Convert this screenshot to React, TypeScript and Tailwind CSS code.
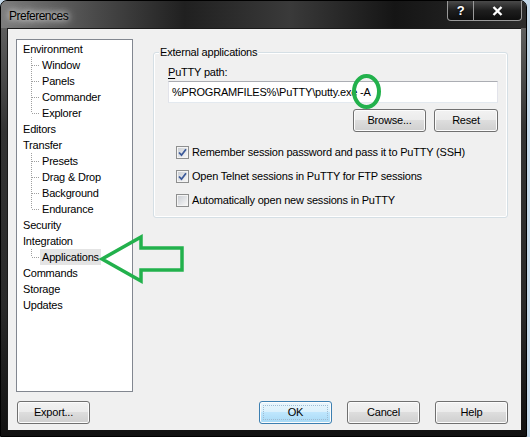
import React from 'react';

type Node = { label: string; children?: string[] };

const tree: Node[] = [
  { label: 'Environment', children: ['Window', 'Panels', 'Commander', 'Explorer'] },
  { label: 'Editors' },
  { label: 'Transfer', children: ['Presets', 'Drag & Drop', 'Background', 'Endurance'] },
  { label: 'Security' },
  { label: 'Integration', children: ['Applications'] },
  { label: 'Commands' },
  { label: 'Storage' },
  { label: 'Updates' },
];

const Connector = ({ last }: { last: boolean }) => (
  <svg width="9" height="16" className="shrink-0" shapeRendering="crispEdges">
    <line x1="0.5" y1="0" x2="0.5" y2={last ? 8 : 16} stroke="#a0a0a0" strokeDasharray="1 1" />
    <line x1="1" y1="8.5" x2="9" y2="8.5" stroke="#a0a0a0" strokeDasharray="1 1" />
  </svg>
);

const Btn = ({
  children,
  className = '',
  primary = false,
}: {
  children: React.ReactNode;
  className?: string;
  primary?: boolean;
}) => (
  <button
    className={
      'h-[23px] rounded-[3px] border text-[11px] text-black shadow-[inset_0_0_0_1px_#fcfcfc] ' +
      (primary
        ? 'border-[#3c7fb1] bg-[linear-gradient(to_bottom,#eaf6fd_0%,#d9f0fc_49%,#bee6fd_50%,#a7d9f5_100%)] p-[3px] '
        : 'border-[#707070] bg-[linear-gradient(to_bottom,#f2f2f2_0%,#ebebeb_49%,#dddddd_50%,#cfcfcf_100%)] ') +
      className
    }
  >
    {primary ? (
      <span className="flex h-full w-full items-center justify-center border border-dotted border-[#9fbcd2]">
        {children}
      </span>
    ) : (
      children
    )}
  </button>
);

const Check = ({ checked, label }: { checked: boolean; label: string }) => (
  <div className="flex h-[13px] items-center">
    <span className="flex h-[13px] w-[13px] shrink-0 items-center justify-center border border-[#8e8f8f] bg-white">
      <span className="flex h-[11px] w-[11px] items-center justify-center border border-[#f4f4f4] bg-[linear-gradient(135deg,#cbcfd5,#f6f6f6)]">
        {checked && (
          <svg width="9" height="9" viewBox="0 0 9 9">
            <path d="M1 4.5 L3.5 7.2 L8 1.2" fill="none" stroke="#3c5a9a" strokeWidth="1.8" />
          </svg>
        )}
      </span>
    </span>
    <span className="ml-[3px]">{label}</span>
  </div>
);

export default function App() {
  return (
    <div className="relative h-[437px] w-[530px] overflow-hidden bg-[#c4d9ea] font-['Liberation_Sans',Arial,sans-serif] text-[11px] tracking-[-0.2px] text-black">
      <div className="flex h-[437px] w-[527px] flex-col rounded-t-[7px] border border-black bg-[linear-gradient(to_bottom,#6a6a6a,#333_30%,#2a2a2a_70%,#111)]">
        {/* title bar */}
        <div className="flex h-[27px] shrink-0 items-start rounded-t-[6px] bg-[linear-gradient(to_right,#7c7c7c,#4a4a4a_18%,#202020_35%,#3a3a3a_55%,#151515_75%,#2c2c2c)]">
          <span className="pl-[8px] pt-[8px] text-[12px] leading-[14px] tracking-[-0.5px] text-black [text-shadow:0_0_6px_#fff,0_0_10px_#ddd]">
            Preferences
          </span>
          <div className="ml-auto mr-[4px] flex h-[20px]">
            <div className="flex w-[27px] items-center justify-center rounded-bl-[4px] border border-t-0 border-[#9a9a9a] bg-[linear-gradient(to_bottom,#4a4a4a,#1e1e1e_50%,#0e0e0e)] text-[13px] font-bold text-white [text-shadow:0_0_3px_#000]">
              ?
            </div>
            <div className="flex w-[48px] items-center justify-center rounded-br-[4px] border border-t-0 border-l-0 border-[#9a9a9a] bg-[linear-gradient(to_bottom,#4a4a4a,#1e1e1e_50%,#0e0e0e)]">
              <svg width="11" height="10" viewBox="0 0 11 10">
                <path d="M1.5 1 L9.5 9 M9.5 1 L1.5 9" stroke="#fff" strokeWidth="2.4" />
              </svg>
            </div>
          </div>
        </div>

        {/* client area */}
        <div className="mb-[6px] ml-[6px] mr-[5px] flex flex-1 flex-col border-t border-l border-[#1a1a1a] bg-[#f0f0f0]">
          <div className="flex pl-[8px] pt-[10px]">
            {/* tree */}
            <div className="h-[353px] w-[117px] shrink-0 border border-[#828790] bg-white pt-[1px]">
              {tree.map((n) => (
                <React.Fragment key={n.label}>
                  <div className="flex h-[16px] items-center pl-[4px]">
                    <span className="px-[2px] leading-[16px]">{n.label}</span>
                  </div>
                  {n.children?.map((c, i) => (
                    <div key={c} className="flex h-[16px] items-center pl-[14px]">
                      <Connector last={i === n.children!.length - 1} />
                      <span
                        className={
                          'px-[2px] leading-[16px] ' + (c === 'Applications' ? 'bg-[#e4e4e4]' : '')
                        }
                      >
                        {c}
                      </span>
                    </div>
                  ))}
                </React.Fragment>
              ))}
            </div>

            {/* options */}
            <div className="ml-[20px] pt-[13px]">
              <div className="relative h-[166px] w-[355px] rounded-[3px] border border-[#d5dfe5] pl-[14px] pt-[13px] shadow-[inset_0_0_0_1px_#fff]">
                <span className="absolute left-[5px] top-[-8px] bg-[#f0f0f0] px-[1px] leading-[14px]">
                  External applications
                </span>
                <div className="leading-[13px]">
                  <span className="underline underline-offset-[2px]">P</span>uTTY path:
                </div>
                <div className="mt-[2px] flex h-[22px] w-[330px] items-center border border-[#abadb3] border-x-[#e2e3ea] border-b-[#e3e9ef] bg-white pl-[3px]">
                  %PROGRAMFILES%\PuTTY\putty.exe -A
                </div>
                <div className="mt-[6px] flex w-[330px] justify-end gap-[8px]">
                  <Btn className="w-[73px]">Browse...</Btn>
                  <Btn className="w-[64px]">Reset</Btn>
                </div>
                <div className="mt-[14px] flex flex-col gap-[11px] pl-[8px]">
                  <Check checked label="Remember session password and pass it to PuTTY (SSH)" />
                  <Check checked label="Open Telnet sessions in PuTTY for FTP sessions" />
                  <Check checked={false} label="Automatically open new sessions in PuTTY" />
                </div>
              </div>
            </div>
          </div>

          {/* bottom buttons */}
          <div className="mt-[9px] flex pl-[9px] pr-[13px]">
            <Btn className="w-[73px]">Export...</Btn>
            <div className="ml-auto flex gap-[15px]">
              <Btn primary className="w-[73px]">
                OK
              </Btn>
              <Btn className="w-[73px]">Cancel</Btn>
              <Btn className="w-[73px]">Help</Btn>
            </div>
          </div>
        </div>
      </div>

      {/* green annotations */}
      <svg className="pointer-events-none absolute inset-0" width="530" height="437">
        <ellipse cx="366.5" cy="91.5" rx="12.5" ry="15.5" fill="none" stroke="#22b14c" strokeWidth="4" />
        <polygon
          points="102,259 141,237 141,248 182,248 182,270 141,270 141,281"
          fill="none"
          stroke="#22b14c"
          strokeWidth="3.5"
        />
      </svg>
    </div>
  );
}
